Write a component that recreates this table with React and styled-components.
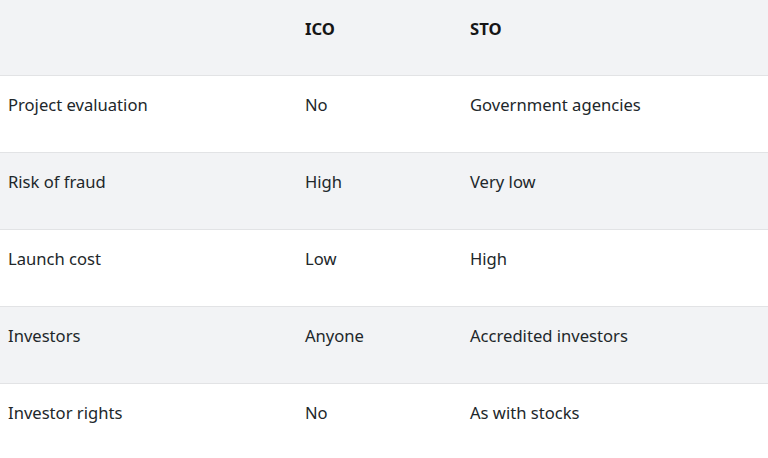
import React from 'react';
import styled, { createGlobalStyle } from 'styled-components';

const rows = [
  ['Project evaluation', 'No', 'Government agencies'],
  ['Risk of fraud', 'High', 'Very low'],
  ['Launch cost', 'Low', 'High'],
  ['Investors', 'Anyone', 'Accredited investors'],
  ['Investor rights', 'No', 'As with stocks'],
];

const App = () => {
  return (
    <>
      <GlobalStyle />
      <Table>
        <Row head>
          <Cell />
          <HeadCell>ICO</HeadCell>
          <HeadCell>STO</HeadCell>
        </Row>
        {rows.map((row, i) => (
          <Row key={row[0]} shaded={i % 2 === 1} last={i === rows.length - 1}>
            {row.map(text => (
              <Cell key={text}>{text}</Cell>
            ))}
          </Row>
        ))}
      </Table>
    </>
  );
};

const GlobalStyle = createGlobalStyle`
  body {
    margin: 0;
    background: #ffffff;
    font-family: "Noto Sans", "Open Sans", sans-serif;
  }
`;

const Table = styled.div`
  width: 768px;
  display: flex;
  flex-direction: column;
`;

const Row = styled.div.withConfig({
  shouldForwardProp: prop => !['head', 'shaded', 'last'].includes(prop)
})`
  display: grid;
  grid-template-columns: 297px 165px 1fr;
  height: ${p => (p.head ? '75px' : '76px')};
  background: ${p => (p.head || p.shaded ? '#f2f3f5' : '#ffffff')};
  border-bottom: ${p => (p.last ? 'none' : '1px solid #e2e3e5')};
`;

const Cell = styled.div`
  padding: 17px 8px 0;
  font-size: 16.6px;
  line-height: 24px;
  color: #21272a;
`;

const HeadCell = styled(Cell)`
  font-weight: 700;
  color: #161616;
`;

export default App;
